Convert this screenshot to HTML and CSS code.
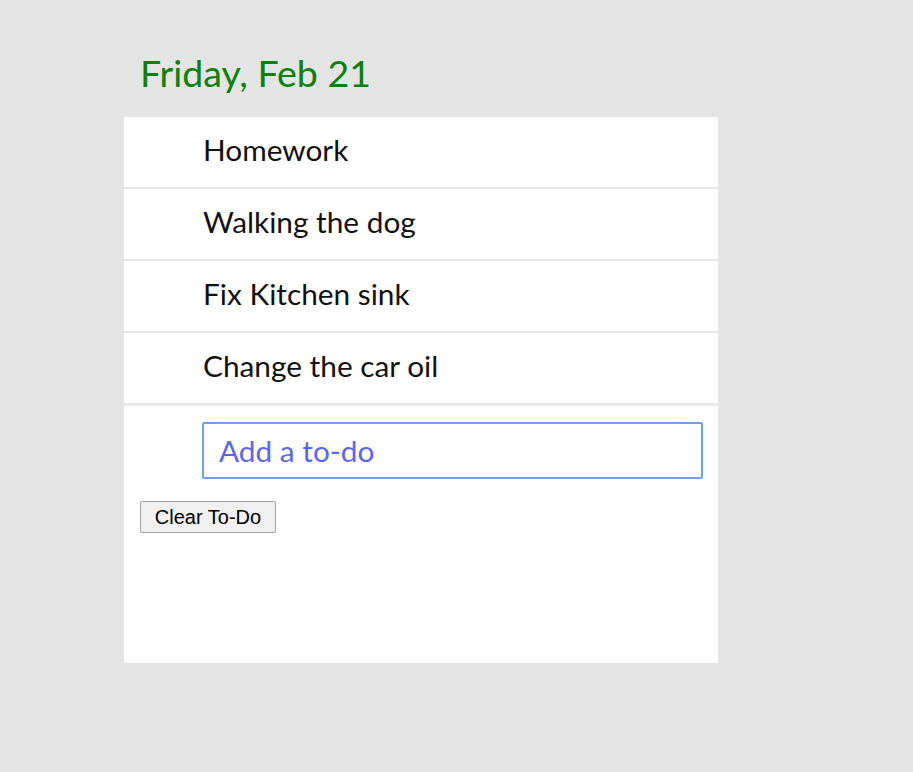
FILE: index.html
```html
<!DOCTYPE html>
<html>
<head>
<meta charset="utf-8">
<link rel="stylesheet" href="styles.css">
</head>
<body>
<div class="app">
  <h1 class="date">Friday, Feb 21</h1>
  <div class="card">
    <ul class="list">
      <li class="item">Homework</li>
      <li class="item">Walking the dog</li>
      <li class="item">Fix Kitchen sink</li>
      <li class="item">Change the car oil</li>
    </ul>
    <div class="add-row">
      <input class="add-input" type="text" placeholder="Add a to-do">
    </div>
    <div class="actions">
      <button class="clear-btn">Clear To-Do</button>
    </div>
  </div>
</div>
</body>
</html>
```
FILE: styles.css
```css
html, body {
  margin: 0;
  padding: 0;
  background: #e4e4e4;
}
.app {
  margin-left: 124px;
  width: 594px;
  padding-top: 48px;
  font-family: "Lato", "Open Sans", sans-serif;
}
.date {
  margin: 0 0 20px 16px;
  font-weight: 400;
  font-size: 37.5px;
  line-height: 49px;
  color: #0b800b;
}
.card {
  background: #fff;
  height: 546px;
}
.list {
  list-style: none;
  margin: 0;
  padding: 0;
}
.item {
  height: 70px;
  line-height: 66px;
  padding-left: 79px;
  font-size: 29.8px;
  color: #111;
  border-bottom: 2px solid #e8e8e8;
}
.item:last-child {
  border-bottom-width: 3px;
}
.add-row {
  padding: 16px 15px 0 78px;
}
.add-input {
  box-sizing: border-box;
  width: 501px;
  height: 57px;
  margin: 0;
  border: 2px solid #6f9ff5;
  border-radius: 2px;
  padding: 0 15px;
  font-family: inherit;
  font-size: 29.8px;
  color: #5b6af0;
  outline: none;
}
.add-input::placeholder {
  color: #5a66ee;
}
.actions {
  padding: 22px 0 0 16px;
}
.clear-btn {
  font-family: "Liberation Sans", Arial, sans-serif;
  font-size: 20px;
  height: 32px;
  width: 136px;
  padding: 0;
  background: #f0f0f0;
  border: 1px solid #a0a0a0;
  border-radius: 2px;
  color: #000;
}
```
